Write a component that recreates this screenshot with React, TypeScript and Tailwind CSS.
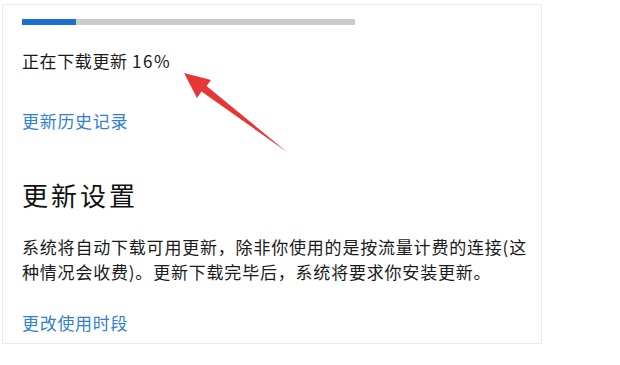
import React from "react";

const font = { fontFamily: '"Noto Sans CJK SC", "Noto Sans", sans-serif' };

export default function App() {
  return (
    <div className="relative w-[620px] h-[365px] bg-white overflow-hidden" style={font}>
      <div className="pl-[2px] pt-[4px]">
        <div className="w-[540px] h-[340px] border border-[#e9e9e9] pl-[19px] flex flex-col">
          <div className="mt-[14px] w-[333px] h-[6px] bg-[#cccccc] flex">
            <div className="w-[54px] h-full bg-[#1c6fcc]" />
          </div>
          <div className="mt-[24px] h-[24px] leading-[24px] text-[17px] tracking-[0.6px] text-[#1a1a1a]">
            正在下载更新 <span className="tracking-[1.5px]">16%</span>
          </div>
          <div className="mt-[36px] h-[24px] leading-[24px] text-[17px] tracking-[0.7px] text-[#2f7fd3]">
            更新历史记录
          </div>
          <div className="mt-[44px] h-[36px] leading-[36px] text-[26px] tracking-[3px] text-[#111111]">
            更新设置
          </div>
          <p className="mt-[21px] w-[518px] leading-[25px] text-[17px] tracking-[0.8px] text-[#1a1a1a]">
            系统将自动下载可用更新，除非你使用的是按流量计费的连接(这种情况会收费)。更新下载完毕后，系统将要求你安装更新。
          </p>
          <div className="mt-[27px] h-[24px] leading-[24px] text-[17px] tracking-[0.7px] text-[#2f7fd3]">
            更改使用时段
          </div>
        </div>
      </div>
      <svg
        className="absolute left-0 top-0 pointer-events-none"
        width="620"
        height="365"
        viewBox="0 0 620 365"
      >
        <polygon
          points="184,73 211,80 206.5,86 287,152 201.5,91.5 197,98"
          fill="#e83535"
        />
      </svg>
    </div>
  );
}
